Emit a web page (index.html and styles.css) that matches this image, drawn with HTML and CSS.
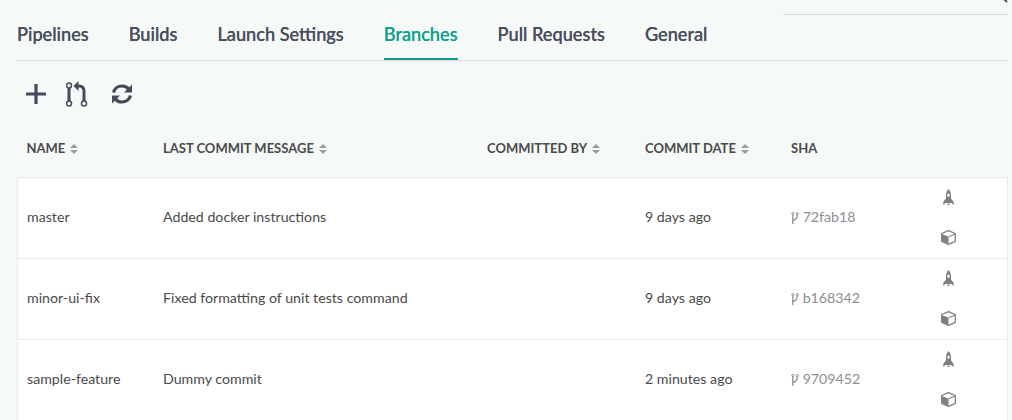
FILE: index.html
```html
<!DOCTYPE html>
<html lang="en">
<head>
  <meta charset="UTF-8">
  <title>Branches</title>
  <link rel="stylesheet" href="styles.css">
</head>
<body>

<svg class="sprites" width="0" height="0">
  <symbol id="sort" viewBox="0 0 8 10">
    <path d="M4 0 8 4H0ZM0 6H8L4 10Z"/>
  </symbol>
  <symbol id="rocket" viewBox="0 0 11 16">
    <path d="M5.500 0C7.300 1.800 8 4 8 6.500V9.500L10.500 12.500 11 16 8.500 14H2.500L0 16 .5 12.500 3 9.500V6.500C3 4 3.700 1.800 5.500 0ZM5.500 4.500A1.200 1.700 0 1 0 5.500 7.900 1.200 1.700 0 0 0 5.500 4.500Z"/>
    <path d="M4.500 14.500H6.500V16H4.500Z"/>
  </symbol>
  <symbol id="cube" viewBox="0 0 15 15">
    <path d="M7.500 .7 14.300 3.500V11.300L7.500 14.300 .7 11.300V3.500Z" fill="#fff" stroke="#7d7f85" stroke-width="1.300" stroke-linejoin="round"/>
    <path d="M1 4 7.500 6.700V14L1 11Z" fill="#7d7f85"/>
    <path d="M7.500 6.700 14 4" fill="none" stroke="#7d7f85" stroke-width="1.200"/>
  </symbol>
  <symbol id="fork" viewBox="0 0 8 12">
    <path d="M1.800 2.500V12M1.800 8.500C5 8 6.300 6.500 6.300 2.800" fill="none" stroke="currentColor" stroke-width="1.300"/>
    <circle cx="1.800" cy="1.500" r="1.100" fill="none" stroke="currentColor"/>
    <circle cx="6.300" cy="1.700" r="1.100" fill="none" stroke="currentColor"/>
  </symbol>
</svg>

<div class="search-row">
  <div class="search-box"></div>
  <svg class="search-icon" width="12" height="12" viewBox="0 0 12 12"><path d="M5 5 11 11" stroke="#4a4f5c" stroke-width="2"/></svg>
</div>

<nav class="tabs">
  <a href="#">Pipelines</a>
  <a href="#">Builds</a>
  <a href="#">Launch Settings</a>
  <a href="#" class="active">Branches</a>
  <a href="#">Pull Requests</a>
  <a href="#">General</a>
</nav>

<div class="toolbar">
  <svg width="24" height="24" viewBox="0 0 24 24"><path d="M12 2V22M2 12H22" fill="none" stroke="#464b5a" stroke-width="3.200"/></svg>
  <svg width="22" height="26" viewBox="0 0 22 26">
    <g fill="none" stroke="#464b5a" stroke-width="1.500">
      <circle cx="3" cy="4.500" r="2.500"/>
      <circle cx="3" cy="22.500" r="2.500"/>
      <circle cx="18" cy="22.500" r="2.500"/>
    </g>
    <path d="M3 7V20M18 20V10C18 6.500 16.500 5 13 5H11" fill="none" stroke="#464b5a" stroke-width="3"/>
    <path d="M12.500 0V10L7.500 5Z" fill="#464b5a"/>
  </svg>
  <svg class="refresh" width="24" height="24" viewBox="0 0 24 24">
    <path d="M3.500 10.500C4.500 6.500 8 4 12 4 15 4 17.500 5.300 19 7.500M20.500 13.500C19.500 17.500 16 20 12 20 9 20 6.500 18.700 5 16.500" fill="none" stroke="#464b5a" stroke-width="3.200"/>
    <path d="M22 2.500V10.500H14ZM2 21.500V13.500H10Z" fill="#464b5a"/>
  </svg>
</div>

<table class="branches">
  <colgroup>
    <col class="col-name">
    <col class="col-message">
    <col class="col-author">
    <col class="col-date">
    <col class="col-sha">
    <col class="col-actions">
  </colgroup>
  <thead>
    <tr>
      <th>NAME <svg class="sort"><use href="#sort"/></svg></th>
      <th>LAST COMMIT MESSAGE <svg class="sort"><use href="#sort"/></svg></th>
      <th>COMMITTED BY <svg class="sort"><use href="#sort"/></svg></th>
      <th>COMMIT DATE <svg class="sort"><use href="#sort"/></svg></th>
      <th>SHA</th>
      <th></th>
    </tr>
  </thead>
  <tbody>
    <tr>
      <td>master</td>
      <td>Added docker instructions</td>
      <td></td>
      <td>9 days ago</td>
      <td class="sha"><svg class="fork"><use href="#fork"/></svg> 72fab18</td>
      <td class="actions">
        <svg class="rocket"><use href="#rocket"/></svg>
        <svg class="cube"><use href="#cube"/></svg>
      </td>
    </tr>
    <tr>
      <td>minor-ui-fix</td>
      <td>Fixed formatting of unit tests command</td>
      <td></td>
      <td>9 days ago</td>
      <td class="sha"><svg class="fork"><use href="#fork"/></svg> b168342</td>
      <td class="actions">
        <svg class="rocket"><use href="#rocket"/></svg>
        <svg class="cube"><use href="#cube"/></svg>
      </td>
    </tr>
    <tr>
      <td>sample-feature</td>
      <td>Dummy commit</td>
      <td></td>
      <td>2 minutes ago</td>
      <td class="sha"><svg class="fork"><use href="#fork"/></svg> 9709452</td>
      <td class="actions">
        <svg class="rocket"><use href="#rocket"/></svg>
        <svg class="cube"><use href="#cube"/></svg>
      </td>
    </tr>
  </tbody>
</table>

</body>
</html>
```

FILE: styles.css
```css
html, body {
  height: 100%;
  overflow: hidden;
}
body {
  font-family: 'Lato', sans-serif;
  background: #f5f9f8;
  color: #4a4a4a;
  margin: 0;
  padding: 0 4px 0 17px;
}
.sprites {
  position: absolute;
}
.search-row {
  display: flex;
  justify-content: flex-end;
  height: 14px;
  position: relative;
}
.search-box {
  width: 225px;
  height: 14px;
  border-bottom: 1px solid #dadada;
}
.search-icon {
  position: absolute;
  right: 0;
  top: -9px;
}
.tabs {
  display: flex;
  gap: 40px;
  height: 46px;
  box-sizing: border-box;
  margin-top: 1px;
  border-bottom: 1px solid #d9dcdc;
}
.tabs a {
  font-size: 18.2px;
  font-weight: 500;
  line-height: 38px;
  color: #4a4f5c;
  text-decoration: none;
  text-shadow: 0 0 .4px #4a4f5c;
}
.tabs a.active {
  color: #14a08c;
  text-shadow: 0 0 .4px #14a08c;
  border-bottom: 2px solid #14a08c;
  height: 45px;
  box-sizing: border-box;
}
.toolbar {
  display: flex;
  align-items: center;
  gap: 18px;
  height: 66px;
  padding-left: 7px;
}
.refresh {
  margin-left: 4px;
}
.branches {
  table-layout: fixed;
  border-collapse: collapse;
  width: 991px;
  font-size: 14.2px;
}
.col-name { width: 136.5px; }
.col-message { width: 324px; }
.col-author { width: 158px; }
.col-date { width: 146px; }
.col-sha { width: 139.5px; }
.branches th {
  height: 50px;
  box-sizing: border-box;
  padding: 0 0 8px 9px;
  text-align: left;
  font-size: 13px;
  font-weight: 700;
  color: #4a4a4a;
  white-space: nowrap;
}
.branches tbody tr {
  background: #fff;
  border: 1px solid #e8ecec;
}
.branches td {
  height: 78px;
  padding: 0 0 2px 9px;
  color: #4a4a4a;
}
.sort {
  width: 8px;
  height: 10px;
  fill: #9b9b9b;
  vertical-align: -1px;
  margin-left: 2px;
}
.branches .sha {
  color: #8a8f94;
}
.fork {
  width: 8px;
  height: 12px;
  vertical-align: -2px;
  color: #8a8f94;
}
.branches .actions {
  padding-left: 21px;
}
.actions svg {
  display: block;
  fill: #7d7f85;
}
.rocket {
  width: 11px;
  height: 16px;
  margin-bottom: 25px;
}
.cube {
  width: 15px;
  height: 15px;
  margin-left: -2px;
}
```
